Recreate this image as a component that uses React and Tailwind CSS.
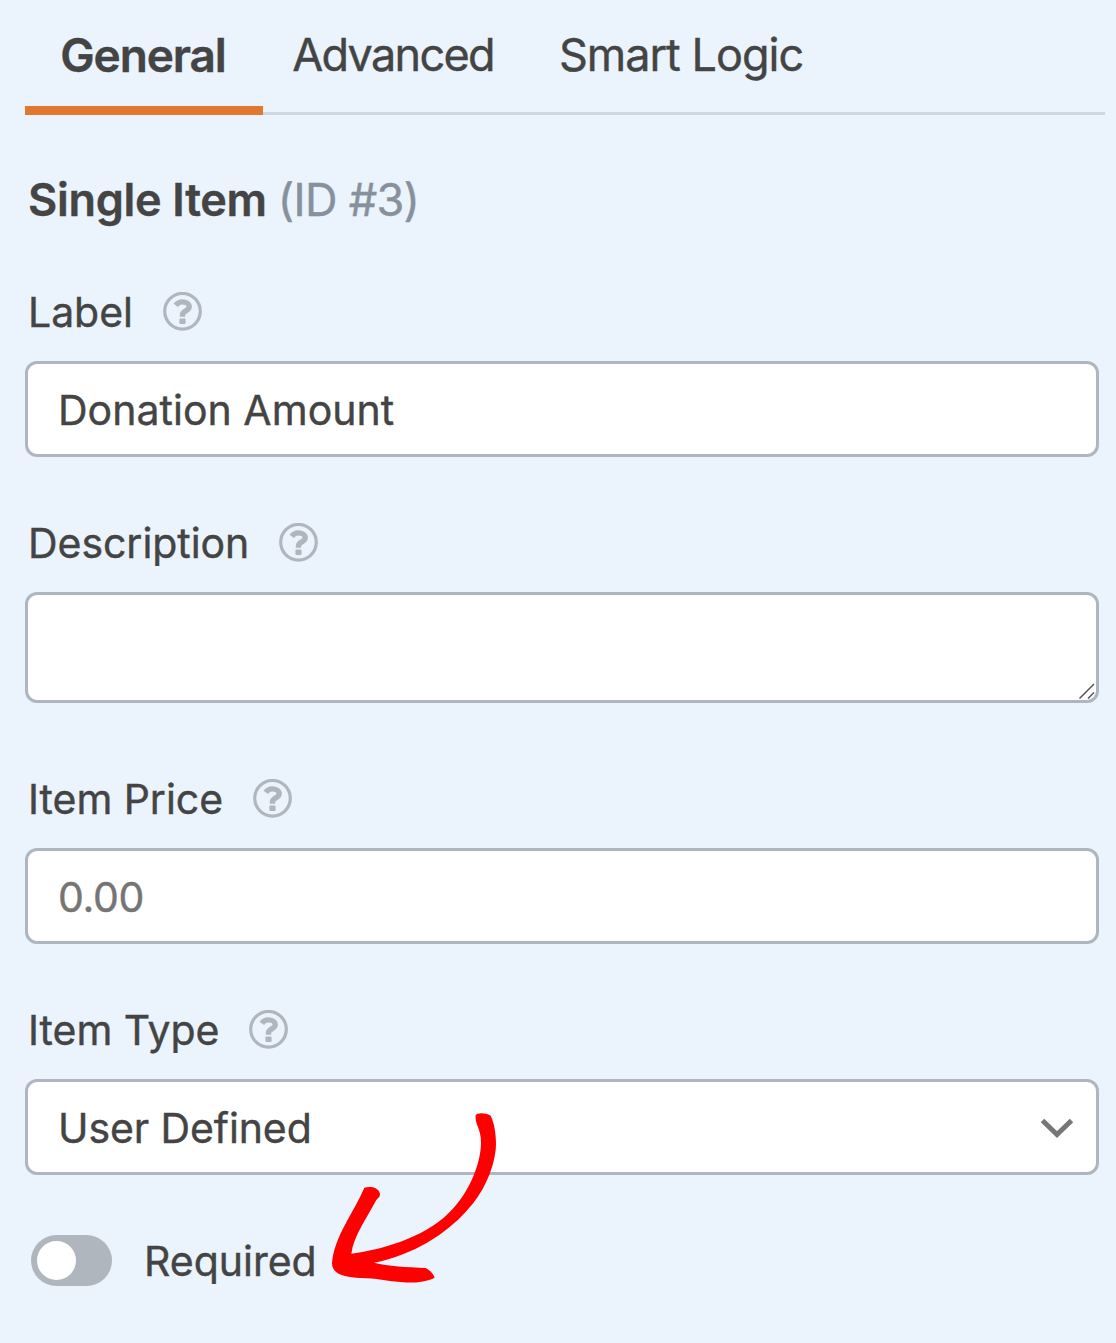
import { useState } from 'react'

const TABS = [
  { id: 'general', label: 'General', cls: 'w-[238px] pr-[2px] text-[46px] tracking-[-1.1px]' },
  { id: 'advanced', label: 'Advanced', cls: 'w-[262px] pr-[2px] text-[45px] tracking-[-1.7px]' },
  { id: 'logic', label: 'Smart Logic', cls: 'w-[312px] text-[45px] tracking-[-1px]' },
]

const field = 'block w-full rounded-xl border-[3px] border-[#b0b6bd] bg-white pl-[30px] text-[41px] text-[#444444] outline-none'

function HelpIcon() {
  return (
    <svg viewBox="0 0 39 39" className="mb-[2px] h-[39px] w-[39px] shrink-0" fill="none" stroke="#b0b6bd">
      <circle cx="19.5" cy="19.3" r="17.8" strokeWidth="3.2" />
      <path d="M12.8 13.4C14.6 10.8 16.6 9.9 19.2 9.9C23 9.9 26.2 11.8 26.2 14.7C26.2 19 19.5 18.7 19.5 22.8V24.8" strokeWidth="5.4" />
      <rect x="16.4" y="26.6" width="6.2" height="5.3" rx="0.8" fill="#b0b6bd" stroke="none" />
    </svg>
  )
}

function FieldLabel({ children }) {
  return (
    <div className="flex h-[50px] items-center gap-[30px] pl-[3px]">
      <span className="text-[41px] leading-[50px] tracking-[-0.05px] whitespace-nowrap">{children}</span>
      <HelpIcon />
    </div>
  )
}

export default function App() {
  const [tab, setTab] = useState('general')
  const [required, setRequired] = useState(false)

  return (
    <div className="relative h-[1343px] w-[1116px] overflow-hidden bg-[#ebf3fc] pl-[25px] font-['Inter',sans-serif] text-[#444444] [-webkit-text-stroke-width:0.4px]">
      {/* Tabs */}
      <div className="flex h-[115px] w-[1080px] border-b-[3px] border-[#d0d6df]">
        {TABS.map(t => (
          <button key={t.id} onClick={() => setTab(t.id)}
            className={`h-[115px] shrink-0 border-b-[9px] pt-[3px] text-center leading-none whitespace-nowrap ${t.cls} ${tab === t.id ? 'border-[#e27730] font-semibold' : 'border-transparent'}`}>
            {t.label}
          </button>
        ))}
      </div>

      <div className="w-[1074px]">
        <h2 className="mt-[57px] flex h-[56px] items-center gap-[11px] pl-[3px] text-[45px] leading-[56px]">
          <span className="font-semibold tracking-[-0.3px]">Single Item</span>
          <span className="tracking-[-0.7px] text-[#86919c]">(ID #3)</span>
        </h2>

        <div className="mt-[59px]">
          <FieldLabel>Label</FieldLabel>
        </div>
        <input defaultValue="Donation Amount" className={`mt-6 h-24 pt-[2px] tracking-[0.03px] ${field}`} />

        <div className="mt-[61px]">
          <FieldLabel>Description</FieldLabel>
        </div>
        <div className="relative mt-6">
          <textarea className={`h-[111px] resize-none ${field}`} />
          <svg viewBox="0 0 16 16" className="absolute right-1 bottom-1 h-4 w-4" stroke="#555555" strokeWidth="1.5">
            <path d="M0.5 15.5L15 1M9 15.5L15 9.5" />
          </svg>
        </div>

        <div className="mt-[71px]">
          <FieldLabel>Item Price</FieldLabel>
        </div>
        <input placeholder="0.00" className={`mt-6 h-24 pt-[2px] tracking-[-0.3px] placeholder:text-[#757575] ${field}`} />

        <div className="mt-[61px]">
          <FieldLabel>Item Type</FieldLabel>
        </div>
        <div className="relative mt-6">
          <select className={`h-24 appearance-none pt-1 tracking-[-0.1px] ${field}`}>
            <option>User Defined</option>
          </select>
          <svg viewBox="0 0 34 20" className="pointer-events-none absolute top-[39px] right-[25px] h-5 w-[34px]" fill="none" stroke="#777777" strokeWidth="5">
            <path d="M2.5 2.5L17 16.5L31.5 2.5" />
          </svg>
        </div>

        {/* Required toggle */}
        <div className="mt-[60px] flex h-[51px] items-center pl-[6px]">
          <button onClick={() => setRequired(!required)}
            className={`flex h-[51px] w-[81px] items-center rounded-full px-[6px] ${required ? 'justify-end bg-[#e27730]' : 'bg-[#b0b6bd]'}`}>
            <span className="h-[39px] w-[39px] rounded-full bg-white" />
          </button>
          <span className="ml-[32px] text-[41px] leading-[50px]">Required</span>
        </div>
      </div>

      {/* Hand-drawn arrow pointing at the toggle */}
      <svg viewBox="0 0 660 630" className="pointer-events-none absolute top-[1090px] left-[310px] h-[210px] w-[220px]" fill="#ff0000">
        <path d="M497 76C500 68 525 67 542 77C556 105 560 150 557 180C550 240 520 310 470 362C410 430 310 495 192 518C235 529 290 531 347 534C358 540 370 550 374 563C350 575 310 580 280 577C230 573 190 563 150 564C110 562 66 555 66 520C72 440 130 370 163 293C180 289 205 290 210 312C210 322 203 325 199 330C170 385 130 440 124 491C230 478 360 435 430 355C480 300 512 220 513 160C514 115 494 105 497 76Z" />
      </svg>
    </div>
  )
}
